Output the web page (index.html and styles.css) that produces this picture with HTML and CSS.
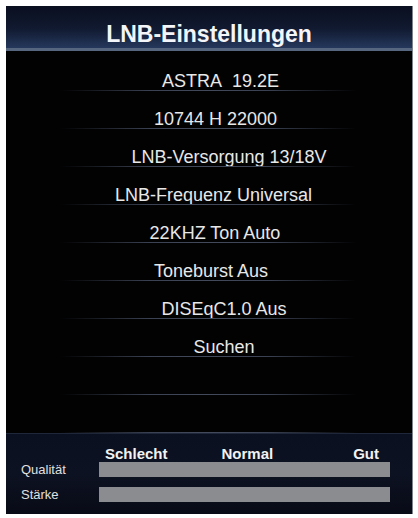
FILE: index.html
```html
<!DOCTYPE html>
<html lang="de">
<head>
<meta charset="utf-8">
<title>LNB-Einstellungen</title>
<link rel="stylesheet" href="styles.css">
</head>
<body>
<div class="screen">
  <header class="head">LNB-Einstellungen</header>
  <ul class="menu">
    <li class="item item--sat">ASTRA&nbsp; 19.2E</li>
    <li class="item item--tp">10744 H 22000</li>
    <li class="item item--power">LNB-Versorgung 13/18V</li>
    <li class="item item--freq">LNB-Frequenz Universal</li>
    <li class="item item--tone">22KHZ Ton Auto</li>
    <li class="item item--burst">Toneburst Aus</li>
    <li class="item item--diseqc">DISEqC1.0 Aus</li>
    <li class="item item--search">Suchen</li>
    <li class="item"></li>
    <li class="item"></li>
  </ul>
  <section class="signal">
    <div class="signal__row signal__row--scale">
      <span></span>
      <div class="scale">
        <span class="scale__bad">Schlecht</span>
        <span class="scale__mid">Normal</span>
        <span class="scale__good">Gut</span>
      </div>
    </div>
    <div class="signal__row">
      <span class="signal__label">Qualität</span>
      <div class="bar"></div>
    </div>
    <div class="signal__row">
      <span class="signal__label">Stärke</span>
      <div class="bar"></div>
    </div>
  </section>
</div>
</body>
</html>
```
FILE: styles.css
```css
html, body {
  margin: 0;
  padding: 0;
  background: #ffffff;
}
body {
  font-family: "Liberation Sans", Arial, sans-serif;
}
.screen {
  margin: 6px 0 0 6px;
  width: 406px;
  height: 508px;
  border-right: 1px solid #7d828b;
  background: #020203;
  display: flex;
  flex-direction: column;
}
.head {
  height: 45px;
  box-sizing: border-box;
  padding-top: 12px;
  line-height: 32px;
  text-align: center;
  color: #f4f5f8;
  font-size: 23px;
  font-weight: bold;
  background: linear-gradient(to bottom, #0a0f1f 0%, #111a31 55%, #25385c 100%);
  border-bottom: 3px solid #56667f;
}
.menu {
  list-style: none;
  margin: 0;
  padding: 2px 0 0 0;
}
.item {
  position: relative;
  height: 38px;
  box-sizing: border-box;
  padding-top: 20px;
  line-height: 17px;
  text-align: center;
  color: #e8e8e8;
  font-size: 18px;
  white-space: pre;
}
.item::after {
  content: "";
  position: absolute;
  left: 55px;
  right: 55px;
  bottom: 0;
  height: 1px;
  background: linear-gradient(to right, rgba(60,66,82,0) 0%, #3a4152 30%, #424a5c 50%, #3a4152 70%, rgba(60,66,82,0) 100%);
}
.item--sat { padding-left: 23px; }
.item--tp { padding-left: 13px; }
.item--power { padding-left: 40px; }
.item--freq { padding-left: 9px; }
.item--tone { padding-left: 12px; }
.item--burst { padding-left: 4px; }
.item--diseqc { padding-left: 30px; }
.item--search { padding-left: 30px; }
.signal {
  flex: 1;
  box-sizing: border-box;
  border-top: 1px solid #1f273a;
  background: linear-gradient(to bottom, #0b1020 0%, #0d1222 50%, #080b16 100%);
  padding: 11px 0 0 15px;
  display: flex;
  flex-direction: column;
  gap: 10px;
}
.signal__row {
  display: grid;
  grid-template-columns: 78px 291px;
  align-items: center;
  height: 15px;
}
.signal__row--scale {
  height: 17px;
  margin-bottom: -10px;
}
.scale {
  display: flex;
  padding: 0 11px 0 6px;
  color: #f2f2f2;
  font-size: 15px;
  font-weight: bold;
  line-height: 17px;
}
.scale__mid { margin-left: 54px; }
.scale__good { margin-left: auto; }
.signal__label {
  color: #e0e0e0;
  font-size: 13px;
  line-height: 15px;
}
.bar {
  height: 15px;
  background: #8b8c8f;
}
```
